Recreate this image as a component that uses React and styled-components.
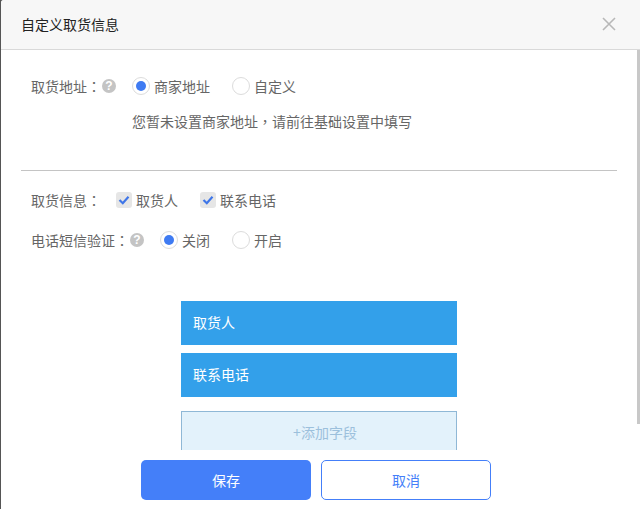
import React from "react"
import styled, { createGlobalStyle } from "styled-components"

const Page = createGlobalStyle`
  html, body {
    margin: 0;
    height: 100%;
    background: #555;
    overflow: hidden;
  }
`

const App = () => {
  return (
    <>
      <Page />
      <Modal>
        <Header>
          <Title>自定义取货信息</Title>
          <CloseIcon viewBox="0 0 14 14">
            <path d="M1 1 L13 13 M13 1 L1 13" />
          </CloseIcon>
        </Header>

        <Body>
          <Section>
            <Row>
              <Label>取货地址<Punct>：</Punct></Label>
              <HelpIcon>?</HelpIcon>
              <Options $left={16}>
                <Radio checked>商家地址</Radio>
                <Radio>自定义</Radio>
              </Options>
            </Row>
            <Hint>您暂未设置商家地址<Punct>，</Punct>请前往基础设置中填写</Hint>
          </Section>

          <Divider />

          <InfoRow>
            <Label>取货信息<Punct>：</Punct></Label>
            <Options $left={15}>
              <Check>取货人</Check>
              <Check>联系电话</Check>
            </Options>
          </InfoRow>
          <VerifyRow>
            <Label>电话短信验证<Punct>：</Punct></Label>
            <HelpIcon>?</HelpIcon>
            <Options $left={16}>
              <Radio checked>关闭</Radio>
              <Radio>开启</Radio>
            </Options>
          </VerifyRow>

          <Fields>
            <Field>取货人</Field>
            <Field>联系电话</Field>
            <AddField>+添加字段</AddField>
          </Fields>
        </Body>

        <Footer>
          <SaveButton>保存</SaveButton>
          <CancelButton>取消</CancelButton>
        </Footer>

        <ScrollThumb />
      </Modal>
    </>
  )
}

const Radio = ({ checked, children }) => (
  <OptionItem>
    <RadioDot $checked={checked} />
    {children}
  </OptionItem>
)

const Check = ({ children }) => (
  <OptionItem>
    <CheckBox>
      <svg viewBox="0 0 16 16" width="16" height="16">
        <path d="M3.5 8 L6.8 11.2 L12.5 4.8" fill="none" stroke="#3f76e8" strokeWidth="2.2" />
      </svg>
    </CheckBox>
    {children}
  </OptionItem>
)

const Modal = styled.div`
  position: relative;
  display: flex;
  flex-direction: column;
  height: 509px;
  margin-left: 1px;
  background: #fff;
  border-top-left-radius: 3px;
  font-family: "Noto Sans CJK SC", "Liberation Sans", sans-serif;
  font-size: 14px;
  color: #666;
  overflow: hidden;
`

const Header = styled.header`
  display: flex;
  flex: none;
  align-items: center;
  justify-content: space-between;
  box-sizing: border-box;
  height: 50px;
  padding: 0 24px 1px 20px;
  background: #f7f7f7;
  border-bottom: 1px solid #d9d9d9;
`

const Title = styled.h1`
  margin: 0;
  font-size: 14px;
  font-weight: 400;
  color: #222;
`

const CloseIcon = styled.svg`
  width: 14px;
  height: 14px;
  fill: none;
  stroke: #b8b8b8;
  stroke-width: 1.6;
`

const Body = styled.main`
  flex: 1;
  min-height: 0;
  padding: 0 23px 0 20px;
  overflow: hidden;
`

const Section = styled.section`
  box-sizing: border-box;
  height: 120px;
  padding: 24px 0 0 10px;
`

const Row = styled.div`
  display: flex;
  align-items: center;
  height: 24px;
`

const InfoRow = styled(Row)`
  margin: 17px 0 0 10px;
`

const VerifyRow = styled(Row)`
  margin: 16px 0 0 10px;
`

const Label = styled.span`
  white-space: nowrap;
`

// centred fullwidth punctuation, as in the original UI font
const Punct = styled.span`
  font-family: "Noto Sans CJK TC", sans-serif;
`

const HelpIcon = styled.span`
  display: flex;
  flex: none;
  align-items: center;
  justify-content: center;
  width: 14px;
  height: 14px;
  margin-left: 1px;
  border-radius: 50%;
  background: #c4c4c4;
  color: #fff;
  font-family: "Liberation Sans", sans-serif;
  font-size: 12px;
  font-weight: 700;
`

const Options = styled.div`
  display: flex;
  align-items: center;
  gap: 22px;
  margin-left: ${(p) => p.$left}px;
`

const OptionItem = styled.label`
  display: flex;
  align-items: center;
  gap: 4px;
`

const RadioDot = styled.span`
  display: flex;
  flex: none;
  align-items: center;
  justify-content: center;
  box-sizing: border-box;
  width: 18px;
  height: 18px;
  border: 1px solid #dcdcdc;
  border-radius: 50%;
  background: #fff;

  &::after {
    content: "";
    display: ${(p) => (p.$checked ? "block" : "none")};
    width: 10px;
    height: 10px;
    border-radius: 50%;
    background: #3f7bf2;
  }
`

const CheckBox = styled.span`
  display: block;
  flex: none;
  width: 16px;
  height: 16px;
  border-radius: 3px;
  background: #e6e6e6;
`

const Hint = styled.p`
  margin: 13px 0 0 101px;
`

const Divider = styled.hr`
  margin: 0;
  border: 0;
  border-top: 1px solid #c4c4c4;
`

const Fields = styled.div`
  display: flex;
  flex-direction: column;
  gap: 8px;
  width: 276px;
  margin: 49px 0 0 160px;
`

const Field = styled.div`
  box-sizing: border-box;
  height: 44px;
  padding-left: 12px;
  background: #33a0ea;
  color: #fff;
  line-height: 42px;
`

const AddField = styled.div`
  flex: none;
  box-sizing: border-box;
  height: 44px;
  margin-top: 6px;
  padding-left: 12px;
  border: 1px solid #8fb8d6;
  background: #e3f2fb;
  color: #9cc0dc;
  line-height: 40px;
  text-align: center;
`

const Footer = styled.footer`
  display: flex;
  flex: none;
  gap: 10px;
  box-sizing: border-box;
  height: 59px;
  padding: 10px 0 0 140px;
  background: #fff;
`

const SaveButton = styled.button`
  box-sizing: border-box;
  width: 170px;
  height: 40px;
  border: 0;
  border-radius: 5px;
  background: #447ff9;
  color: #fff;
  font: inherit;
`

const CancelButton = styled(SaveButton)`
  border: 1px solid #447ff9;
  background: #fff;
  color: #447ff9;
`

const ScrollThumb = styled.div`
  position: absolute;
  top: 50px;
  right: 0;
  width: 3px;
  height: 374px;
  background: #c8c8c8;
`

export default App
